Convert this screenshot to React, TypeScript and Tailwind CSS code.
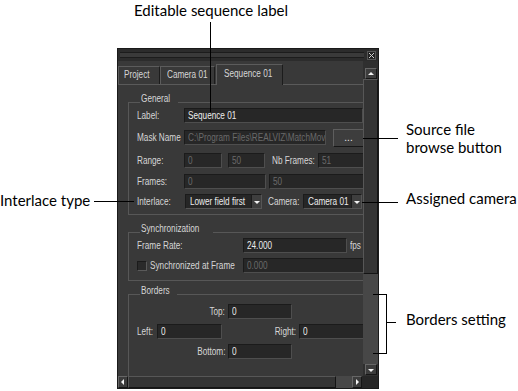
import React from 'react';

const ui = "font-['Liberation_Sans',Arial,sans-serif] text-[10px] text-[#d6d6d6]";
const note = "font-['Lato',sans-serif] text-[15px] leading-[18px] text-black whitespace-nowrap";

// narrow UI text: the reference uses a condensed system face
function T({ children, right }: { children: React.ReactNode; right?: boolean }) {
    return (
        <span className={`inline-block whitespace-nowrap scale-x-[0.82] ${right ? 'origin-right' : 'origin-left'}`}>
            {children}
        </span>
    );
}

function Field({ className, value, disabled }: { className: string; value?: string; disabled?: boolean }) {
    return (
        <div
            className={`h-[15px] shrink-0 bg-[#272727] border border-t-[#1b1b1b] border-l-[#1b1b1b] border-b-[#4e4e4e] border-r-[#4e4e4e] px-[3px] leading-[13px] whitespace-nowrap overflow-hidden ${disabled ? 'text-[#6a6a6a]' : 'text-[#ececec]'} ${className}`}
        >
            <T>{value}</T>
        </div>
    );
}

function Arrow({ dir }: { dir: 'up' | 'down' | 'left' | 'right' }) {
    const pts = {
        up: '1,5 4,2 7,5',
        down: '1,3 4,6 7,3',
        left: '5,1 2,4 5,7',
        right: '3,1 6,4 3,7',
    }[dir];
    return (
        <svg width="8" height="8" viewBox="0 0 8 8">
            <polygon points={pts} fill="#f2f2f2" />
        </svg>
    );
}

function Select({ className, value }: { className: string; value: string }) {
    return (
        <div className={`h-[15px] shrink-0 flex bg-[#262626] border border-t-[#1b1b1b] border-l-[#1b1b1b] border-b-[#555] border-r-[#555] ${className}`}>
            <div className="flex-1 px-[4px] leading-[13px] text-[#ececec] whitespace-nowrap overflow-hidden">
                <T>{value}</T>
            </div>
            <div className="w-[10px] flex items-center justify-center bg-[#3e3e3e] border-l border-[#1b1b1b]">
                <Arrow dir="down" />
            </div>
        </div>
    );
}

function Group({ title, className, children }: { title: string; className: string; children: React.ReactNode }) {
    return (
        <div className={`w-[238px] shrink-0 border border-[#575757] pl-[8px] ${className}`}>
            <div className="-mt-[10px] ml-[3px] w-fit px-px bg-[#393939] leading-[11px] h-[11px]">
                <T>{title}</T>
            </div>
            {children}
        </div>
    );
}

function Row({ className, children }: { className?: string; children: React.ReactNode }) {
    return <div className={`flex items-center h-[15px] ${className ?? ''}`}>{children}</div>;
}

function Panel() {
    return (
        <div className={`w-[262px] h-[341px] shrink-0 flex flex-col bg-[#393939] border border-[#1a1a1a] ${ui}`}>
            {/* title bar */}
            <div className="h-[12px] flex items-center bg-[#2c2c2c] px-[2px] gap-[3px]">
                <div className="flex-1 h-[6px] border-y border-[#1c1c1c] bg-[#3a3a3a]" />
                <div className="w-[9px] h-[9px] flex items-center justify-center bg-[#222] border border-[#555]">
                    <svg width="5" height="5" viewBox="0 0 5 5">
                        <path d="M0 0L5 5M5 0L0 5" stroke="#cfcfcf" strokeWidth="1" />
                    </svg>
                </div>
            </div>

            <div className="flex flex-1 min-h-0">
                {/* content */}
                <div className="w-[245px] overflow-hidden flex flex-col">
                    {/* tabs */}
                    <div className="h-[24px] shrink-0 flex items-end border-b border-[#5a5a5a]">
                        <div className="w-[42px] h-[18px] border-t border-l border-[#5c5c5c] border-r border-r-[#1c1c1c] px-[5px] leading-[16px]">
                            <T>Project</T>
                        </div>
                        <div className="w-[55px] h-[18px] border-t border-l border-[#5c5c5c] border-r border-r-[#1c1c1c] px-[6px] leading-[16px]">
                            <T>Camera 01</T>
                        </div>
                        <div className="ml-[1px] w-[67px] h-[21px] -mb-px bg-[#393939] border-t border-l border-[#5c5c5c] border-r border-r-[#1c1c1c] px-[7px] leading-[17px]">
                            <T>Sequence 01</T>
                        </div>
                    </div>

                    {/* page */}
                    <div className="pl-[10px] flex flex-col">
                        <Group title="General" className="mt-[17px] pb-[5px]">
                            <Row className="mt-[4px]">
                                <span className="w-[47px]"><T>Label:</T></span>
                                <Field className="w-[179px]" value="Sequence 01" />
                            </Row>
                            <Row className="mt-[7px]">
                                <span className="w-[47px]"><T>Mask Name</T></span>
                                <Field className="w-[142px]" value="C:\Program Files\REALVIZ\MatchMover" disabled />
                                <div className="ml-[7px] w-[31px] h-[18px] shrink-0 flex items-center justify-center bg-[#3d3d3d] border border-t-[#5e5e5e] border-l-[#5e5e5e] border-b-[#161616] border-r-[#161616] text-[#e6e6e6] leading-[10px]">...</div>
                            </Row>
                            <Row className="mt-[8px]">
                                <span className="w-[47px]"><T>Range:</T></span>
                                <Field className="w-[38px]" value="0" disabled />
                                <Field className="ml-[6px] w-[37px]" value="50" disabled />
                                <span className="ml-[7px] w-[46px]"><T>Nb Frames:</T></span>
                                <Field className="w-[46px]" value="51" disabled />
                            </Row>
                            <Row className="mt-[6px]">
                                <span className="w-[47px]"><T>Frames:</T></span>
                                <Field className="w-[82px]" value="0" disabled />
                                <Field className="ml-[3px] w-[96px]" value="50" disabled />
                            </Row>
                            <Row className="mt-[5px]">
                                <span className="w-[48px]"><T>Interlace:</T></span>
                                <Select className="w-[77px]" value="Lower field first" />
                                <span className="ml-[6px] w-[35px]"><T>Camera:</T></span>
                                <Select className="w-[59px]" value="Camera 01" />
                            </Row>
                        </Group>

                        <Group title="Synchronization" className="mt-[17px] pb-[7px]">
                            <Row className="mt-[4px]">
                                <span className="w-[106px]"><T>Frame Rate:</T></span>
                                <Field className="w-[104px]" value="24.000" />
                                <span className="ml-[3px]"><T>fps</T></span>
                            </Row>
                            <Row className="mt-[5px]">
                                <div className="w-[10px] h-[10px] shrink-0 bg-[#2a2a2a] border border-t-[#1b1b1b] border-l-[#1b1b1b] border-b-[#5a5a5a] border-r-[#5a5a5a]" />
                                <span className="ml-[3px] w-[93px]"><T>Synchronized at Frame</T></span>
                                <Field className="w-[122px]" value="0.000" disabled />
                            </Row>
                        </Group>

                        <Group title="Borders" className="mt-[13px] h-[120px]">
                            <Row className="mt-[8px]">
                                <span className="w-[88px] text-right"><T right>Top:</T></span>
                                <Field className="ml-[3px] w-[64px]" value="0" />
                            </Row>
                            <Row className="mt-[5px]">
                                <span className="w-[20px]"><T>Left:</T></span>
                                <Field className="w-[65px]" value="0" />
                                <span className="w-[74px] text-right"><T right>Right:</T></span>
                                <Field className="ml-[3px] w-[65px]" value="0" />
                            </Row>
                            <Row className="mt-[5px]">
                                <span className="w-[88px] text-right"><T right>Bottom:</T></span>
                                <Field className="ml-[3px] w-[64px]" value="0" />
                            </Row>
                        </Group>
                    </div>
                </div>

                {/* vertical scrollbar */}
                <div className="w-[15px] flex flex-col items-center bg-[#2f2f2f] pt-[7px] pb-[1px]">
                    <div className="w-[12px] h-[11px] flex items-center justify-center bg-[#3c3c3c] border border-t-[#666] border-l-[#666] border-b-[#161616] border-r-[#161616]">
                        <Arrow dir="up" />
                    </div>
                    <div className="w-[15px] h-[195px] bg-[#343434] border border-t-[#575757] border-l-[#575757] border-b-[#141414] border-r-[#141414]" />
                    <div className="w-[15px] flex-1 bg-[#474747]" />
                    <div className="w-[12px] h-[11px] flex items-center justify-center bg-[#3c3c3c] border border-t-[#666] border-l-[#666] border-b-[#161616] border-r-[#161616]">
                        <Arrow dir="down" />
                    </div>
                </div>
            </div>

            {/* horizontal scrollbar */}
            <div className="h-[12px] flex bg-[#2f2f2f]">
                <div className="w-[10px] flex items-center justify-center bg-[#3c3c3c] border border-t-[#666] border-l-[#666] border-b-[#161616] border-r-[#161616]">
                    <Arrow dir="left" />
                </div>
                <div className="w-[208px] bg-[#343434] border border-t-[#575757] border-l-[#575757] border-b-[#141414] border-r-[#141414]" />
                <div className="w-[16px] bg-[#474747]" />
                <div className="w-[10px] flex items-center justify-center bg-[#3c3c3c] border border-t-[#666] border-l-[#666] border-b-[#161616] border-r-[#161616]">
                    <Arrow dir="right" />
                </div>
                <div className="flex-1 bg-[#262626]" />
            </div>
        </div>
    );
}

export default function App() {
    return (
        <div className="relative w-[518px] h-[391px] overflow-hidden bg-white">
            <div className={`h-[48px] pl-[134px] pt-px ${note}`}>Editable sequence label</div>
            <div className="flex">
                <div className={`w-[117px] shrink-0 pt-[143px] ${note}`}>Interlace type</div>
                <Panel />
                <div className={`pl-[27px] flex flex-col ${note}`}>
                    <div className="mt-[72px]">Source file<br />browse button</div>
                    <div className="mt-[33px]">Assigned camera</div>
                    <div className="mt-[103px]">Borders setting</div>
                </div>
            </div>

            {/* callout lines */}
            <div className="absolute left-[210px] top-[22px] w-px h-[90px] bg-black" />
            <div className="absolute left-[363px] top-[138px] w-[35px] h-px bg-black" />
            <div className="absolute left-[362px] top-[202px] w-[36px] h-px bg-black" />
            <div className="absolute left-[94px] top-[201px] w-[40px] h-px bg-black" />
            <div className="absolute left-[373px] top-[294px] w-[14px] h-[60px] border-y border-r border-black" />
            <div className="absolute left-[386px] top-[322px] w-[10px] h-px bg-black" />
        </div>
    );
}
